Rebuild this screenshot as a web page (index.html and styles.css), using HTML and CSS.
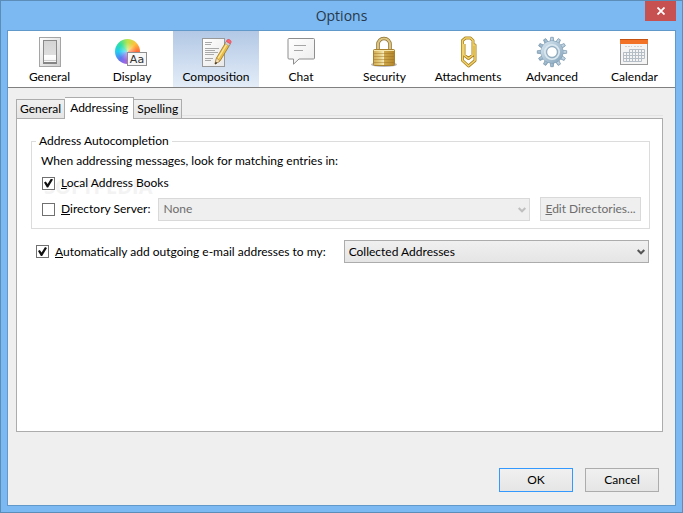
FILE: index.html
```html
<!DOCTYPE html>
<html lang="en">
<head>
<meta charset="utf-8">
<title>Options</title>
<link rel="stylesheet" href="styles.css">
</head>
<body>
<div class="window">
  <header class="titlebar">
    <h1 class="title">Options</h1>
    <button class="close" type="button" aria-label="Close">
      <svg width="8" height="8" viewBox="0 0 8 8"><path d="M0.5 0.5L7.5 7.5M7.5 0.5L0.5 7.5" stroke="#fff" stroke-width="1.8"/></svg>
    </button>
  </header>
  <main class="client">
    <nav class="toolbar">
      <button class="tool" type="button">
        <svg class="icon" viewBox="0 0 32 32">
          <defs><linearGradient id="sw" x2="0" y2="1"><stop offset="0" stop-color="#d4d4d4"/><stop offset=".62" stop-color="#dedede"/><stop offset=".63" stop-color="#fff"/><stop offset="1" stop-color="#f4f4f4"/></linearGradient>
          <linearGradient id="plate" x2="1" y2="1"><stop offset="0" stop-color="#fff"/><stop offset="1" stop-color="#cfcfcf"/></linearGradient></defs>
          <rect x="5.500" y="1.500" width="21" height="29" fill="url(#plate)" stroke="#a5a5a5"/>
          <rect x="9.500" y="4.500" width="13" height="23" fill="url(#sw)" stroke="#8a8a8a"/>
          <path d="M9 27h14" stroke="#858585" stroke-width="2"/>
          <path d="M10 24.500h12" stroke="#ccc"/>
        </svg>
        <span>General</span>
      </button>
      <button class="tool" type="button">
        <span class="icon wheel">
          <svg class="sample" viewBox="0 0 32 32">
            <rect x="11.500" y="16.500" width="19" height="13" fill="#f7f7f7" stroke="#8f8f8f"/>
            <text x="21" y="27" text-anchor="middle" class="sample-text">Aa</text>
          </svg>
        </span>
        <span>Display</span>
      </button>
      <button class="tool selected" type="button" aria-current="page">
        <svg class="icon" viewBox="0 0 32 32">
          <defs><linearGradient id="page" x2="1" y2="1"><stop offset="0" stop-color="#fff"/><stop offset="1" stop-color="#e8e8e8"/></linearGradient></defs>
          <rect x="2.500" y="2.500" width="22" height="28" fill="url(#page)" stroke="#989898"/>
          <path d="M5 6.500h7M5 8.500h6M5 12.500h14M5 14.500h10M5 16.500h13M5 18.500h9M5 22.500h8M5 24.500h6" stroke="#a9a9a9"/>
          <path d="M15 28l1.500-6L26 6l4 2.500L20 25z" fill="#e9bd45" stroke="#9a7424" stroke-width=".8"/>
          <path d="M18 22.500L27.500 7" stroke="#fbe69a" stroke-width="1.400"/>
          <path d="M15 28l1.500-6 3.500 3z" fill="#f4dfb6" stroke="#987133" stroke-width=".5"/>
          <path d="M15 28.500l.7-2.700 1.600 1.200z" fill="#222"/>
          <path d="M25 7.500l1.300-2.200 4 2.500L29 10z" fill="#cfcfcf" stroke="#888" stroke-width=".4"/>
          <path d="M26.300 5.300c.8-2 2.300-2.200 3.600-1.400s1.700 2 .4 3.900z" fill="#ff6570" stroke="#db4450" stroke-width=".7"/>
        </svg>
        <span>Composition</span>
      </button>
      <button class="tool" type="button">
        <svg class="icon" viewBox="0 0 32 32">
          <defs><linearGradient id="bub" x2="1" y2="1"><stop offset="0" stop-color="#fff"/><stop offset="1" stop-color="#ececec"/></linearGradient></defs>
          <path d="M4 2.500h24.500a1 1 0 0 1 1 1V22a1 1 0 0 1-1 1H14l-5.500 5.200V23H4a1 1 0 0 1-1-1V3.500a1 1 0 0 1 1-1z" fill="url(#bub)" stroke="#8e8e8e"/>
          <path d="M9 9.500h12M9 14.500h9" stroke="#a5a5a5"/>
        </svg>
        <span>Chat</span>
      </button>
      <button class="tool" type="button">
        <svg class="icon" viewBox="0 0 32 32">
          <defs><linearGradient id="gold" x2="1" y2="0"><stop offset="0" stop-color="#d2ac52"/><stop offset=".35" stop-color="#ead58b"/><stop offset=".48" stop-color="#f5e9b9"/><stop offset=".52" stop-color="#cfa84c"/><stop offset="1" stop-color="#b2842a"/></linearGradient></defs>
          <ellipse cx="15" cy="28.500" rx="13" ry="2.500" fill="#b8b8c4"/>
          <path d="M9 14V8.500a6 6 0 0 1 12 0V14" fill="none" stroke="#8b6f30" stroke-width="3.600"/>
          <path d="M9 14V8.500a6 6 0 0 1 12 0V14" fill="none" stroke="#dcc583" stroke-width="2.200"/>
          <rect x="4.500" y="13.500" width="21" height="16" rx="1" fill="url(#gold)" stroke="#a8822f"/>
          <path d="M5 17.500h20M5 20.500h20M5 23.500h20M5 26.500h20" stroke="#9b6f1e" stroke-opacity=".45"/>
          <path d="M5 14.500h20" stroke="#f6e6a9"/>
        </svg>
        <span>Security</span>
      </button>
      <button class="tool" type="button">
        <svg class="icon" viewBox="0 0 32 32">
          <g fill="none" stroke-linejoin="round">
            <path d="M12 8v11l4.500 3.500L21 19V4.500L18.500 2h-5L10.500 4.500v20L16.500 30l6.500-5.500V9h-2" stroke="#a98122" stroke-width="3"/>
            <path d="M12 8v11l4.500 3.500L21 19V4.500L18.500 2h-5L10.500 4.500v20L16.500 30l6.500-5.500V9h-2" stroke="#f0d36c" stroke-width="1.500"/>
          </g>
        </svg>
        <span>Attachments</span>
      </button>
      <button class="tool" type="button">
        <svg class="icon" viewBox="0 0 32 32">
          <defs><linearGradient id="steel" x2="1" y2="1"><stop offset="0" stop-color="#cfe0ec"/><stop offset="1" stop-color="#8eabc1"/></linearGradient>
          <path id="tooth" d="M14.200 6L14.700 1.300h2.600L17.800 6zM14.200 26L14.700 30.700h2.600L17.800 26z"/></defs>
          <g fill="url(#steel)" stroke="#7594ab" stroke-width=".7">
            <use href="#tooth"/><use href="#tooth" transform="rotate(30 16 16)"/><use href="#tooth" transform="rotate(60 16 16)"/><use href="#tooth" transform="rotate(90 16 16)"/><use href="#tooth" transform="rotate(120 16 16)"/><use href="#tooth" transform="rotate(150 16 16)"/>
          </g>
          <circle cx="16" cy="16" r="8.300" fill="none" stroke="#7897ae" stroke-width="6.200"/>
          <circle cx="16" cy="16" r="8.300" fill="none" stroke="url(#steel)" stroke-width="5.600"/>
          <circle cx="16" cy="16" r="7.200" fill="none" stroke="#dbe8f0" stroke-width="1.600"/>
          <circle cx="16" cy="16" r="5.300" fill="#fff" stroke="#7f9db4" stroke-width=".8"/>
        </svg>
        <span>Advanced</span>
      </button>
      <button class="tool" type="button">
        <svg class="icon" viewBox="0 0 32 32">
          <rect x="1.500" y="3.500" width="27" height="25" fill="#f4f4f4" stroke="#999"/>
          <rect x="1" y="3" width="28" height="5" fill="#f27227"/>
          <path d="M1 3.500h28" stroke="#c65312"/>
          <path d="M6 10.500h7M15 10.500h8" stroke="#d2d2d2" stroke-dasharray="2 1"/>
          <path d="M10.500 13.500h15v9h-3v3h-18v-9h6zM4.500 19.500h21M4.500 22.500h18M10.500 16.500h15M7.500 16v9.500M10.500 16v9.500M13.500 13.500v12M16.500 13.500v12M19.500 13.500v12M22.500 13.500v9" fill="none" stroke="#b4bcc5"/>
        </svg>
        <span>Calendar</span>
      </button>
    </nav>

    <section class="pane">
      <div class="tabs" role="tablist">
        <button class="tab" type="button" role="tab">General</button>
        <button class="tab active" type="button" role="tab" aria-selected="true">Addressing</button>
        <button class="tab" type="button" role="tab">Spelling</button>
      </div>
      <div class="panel" role="tabpanel">
        <fieldset class="group">
          <legend>Address Autocompletion</legend>
          <p class="hint">When addressing messages, look for matching entries in:</p>
          <div class="row">
            <input class="check" type="checkbox" id="local" checked>
            <label for="local"><u>L</u>ocal Address Books</label>
            <div class="watermark" aria-hidden="true">SOFTPEDIA<sup>™</sup></div>
          </div>
          <div class="row server">
            <input class="check" type="checkbox" id="directory">
            <label for="directory"><u>D</u>irectory Server:</label>
            <div class="dropdown disabled">
              <select aria-label="Directory Server" disabled><option>None</option></select>
              <svg class="chevron" viewBox="0 0 8 6"><path d="M0.700 1L4 4.300 7.300 1" fill="none" stroke="currentColor" stroke-width="2"/></svg>
            </div>
            <button class="button edit" type="button" disabled><u>E</u>dit Directories...</button>
          </div>
        </fieldset>
        <div class="row collect">
          <input class="check" type="checkbox" id="auto" checked>
          <label for="auto"><u>A</u>utomatically add outgoing e-mail addresses to my:</label>
          <div class="dropdown">
            <select aria-label="Address book"><option>Collected Addresses</option></select>
            <svg class="chevron" viewBox="0 0 8 6"><path d="M0.700 1L4 4.300 7.300 1" fill="none" stroke="currentColor" stroke-width="2"/></svg>
          </div>
        </div>
      </div>
    </section>

    <footer class="actions">
      <button class="button default" type="button">OK</button>
      <button class="button" type="button">Cancel</button>
    </footer>
  </main>
</div>
</body>
</html>
```
FILE: styles.css
```css
* { box-sizing: border-box; }

body {
  margin: 0;
  font: 12px/16px Lato, "Open Sans", sans-serif;
  color: #000;
}

button, select, input { font: inherit; color: inherit; margin: 0; }
button { padding: 0; }
svg { display: block; }

.window {
  display: flex;
  flex-direction: column;
  min-height: 100vh;
  padding: 0 6px 6px;
  background: #7cb9f2;
  border: 1px solid #5c8cb8;
}

.titlebar {
  position: relative;
  display: flex;
  justify-content: center;
  height: 29px;
}

.title { margin: 0; font: 400 14px/29px "Open Sans", sans-serif; color: #27384a; }

.close {
  position: absolute;
  top: 0;
  right: 0;
  display: grid;
  place-items: center;
  width: 31px;
  height: 20px;
  border: 0;
  background: #c75050;
}

.client {
  flex: 1;
  display: flex;
  flex-direction: column;
  background: #efefef;
  border: 1px solid #6299cb;
}

.toolbar {
  display: grid;
  grid-template-columns: 83fr 82fr 86fr 84fr 83fr 84fr 84fr 81fr;
  height: 57px;
  background: #fff;
  border-bottom: 1px solid #808080;
}

.tool {
  display: flex;
  flex-direction: column;
  align-items: center;
  gap: 1px;
  min-width: 0;
  padding-top: 5px;
  border: 0;
  background: none;
  white-space: nowrap;
}

.tool.selected { background: linear-gradient(#b2c8e5, #e4edf8); }
.icon { display: block; width: 32px; height: 32px; }

.wheel { position: relative; }

.wheel::before {
  content: "";
  position: absolute;
  left: -1px;
  top: 3px;
  width: 25px;
  height: 25px;
  border-radius: 50%;
  background:
    radial-gradient(circle, #ffffff88 0, #ffffff00 9px),
    conic-gradient(#b9e54b, #ffc13d 45deg, #ff6a38 90deg, #f03c79 130deg, #b95fe0 180deg, #5b79f0 225deg, #21cdf2 270deg, #30e0a0 315deg, #b9e54b);
}

.sample { position: relative; }
.sample-text { font: 11px "DejaVu Sans", sans-serif; fill: #333; }

.pane {
  flex: 1;
  display: flex;
  flex-direction: column;
  padding: 9px 12px 0 8px;
}

.tabs { display: flex; align-items: flex-end; height: 21px; }

.tabs::after {
  content: "";
  flex: 1;
  height: 2px;
  border-top: 1px solid #e3e3e3;
}

.tab {
  height: 19px;
  padding: 0 3px;
  border: 1px solid #acacac;
  border-bottom: 0;
  background: linear-gradient(#f0f0f0, #e5e5e5);
}

.tab + .tab { border-left: 0; }
.tab.active {
  z-index: 1;
  height: 22px;
  margin-bottom: -1px;
  padding: 0 5px 2px;
  background: #fff;
}

.panel {
  flex: 1;
  padding: 14px 12px 0 14px;
  background: #fff;
  border: 1px solid #acacac;
}

.group {
  min-width: 0;
  margin: 0;
  padding: 4px 8px 7px 10px;
  border: 1px solid #dcdcdc;
}

.group legend { margin-left: -6px; padding: 0 3px; }
.hint { margin: 0 -1px; }
.row { position: relative; display: flex; align-items: center; }
.group .row { height: 24px; margin-top: 2px; }
.row label { position: relative; z-index: 1; margin-left: 6px; white-space: nowrap; }

.check {
  appearance: none;
  flex: none;
  width: 13px;
  height: 13px;
  border: 1px solid #707070;
  background: #fff;
}

.check:checked::before {
  content: "";
  display: block;
  width: 9px;
  height: 9px;
  margin: 1px;
  background: #111;
  clip-path: polygon(0 45%, 20% 34%, 40% 60%, 78% 0, 100% 10%, 46% 100%, 32% 100%);
}

.group .row .check { position: relative; z-index: 1; }

.watermark {
  position: absolute;
  left: 2px;
  top: 0;
  font: bold 20px/24px "Open Sans", sans-serif;
  color: #f3f3f3;
}

.watermark sup { font-size: 8px; }

.dropdown { position: relative; flex: 1; }
.server .dropdown { margin-left: 8px; }
.collect .dropdown { margin-left: 18px; }

.dropdown select {
  appearance: none;
  display: block;
  width: 100%;
  height: 23px;
  padding: 0 20px 0 4px;
  border: 1px solid #acacac;
  border-radius: 0;
  background: linear-gradient(#f0f0f0, #e5e5e5);
  opacity: 1;
}

.dropdown.disabled select { color: #6d6d6d; background: #efefef; border-color: #d9d9d9; }
.chevron { position: absolute; right: 4px; top: 9px; width: 8px; height: 6px; color: #555; pointer-events: none; }
.disabled .chevron { color: #bfbfbf; }

.button {
  width: 74px;
  height: 24px;
  border: 1px solid #acacac;
  background: linear-gradient(#f0f0f0, #e5e5e5);
  white-space: nowrap;
}

.button.default { border-color: #3399ff; }
.button.edit { width: 101px; margin-left: 10px; background: #efefef; border-color: #d9d9d9; color: #6d6d6d; }

.collect { margin: 11px 1px 0 5px; }

.actions {
  display: flex;
  justify-content: flex-end;
  gap: 12px;
  padding: 36px 16px 13px;
}
```
